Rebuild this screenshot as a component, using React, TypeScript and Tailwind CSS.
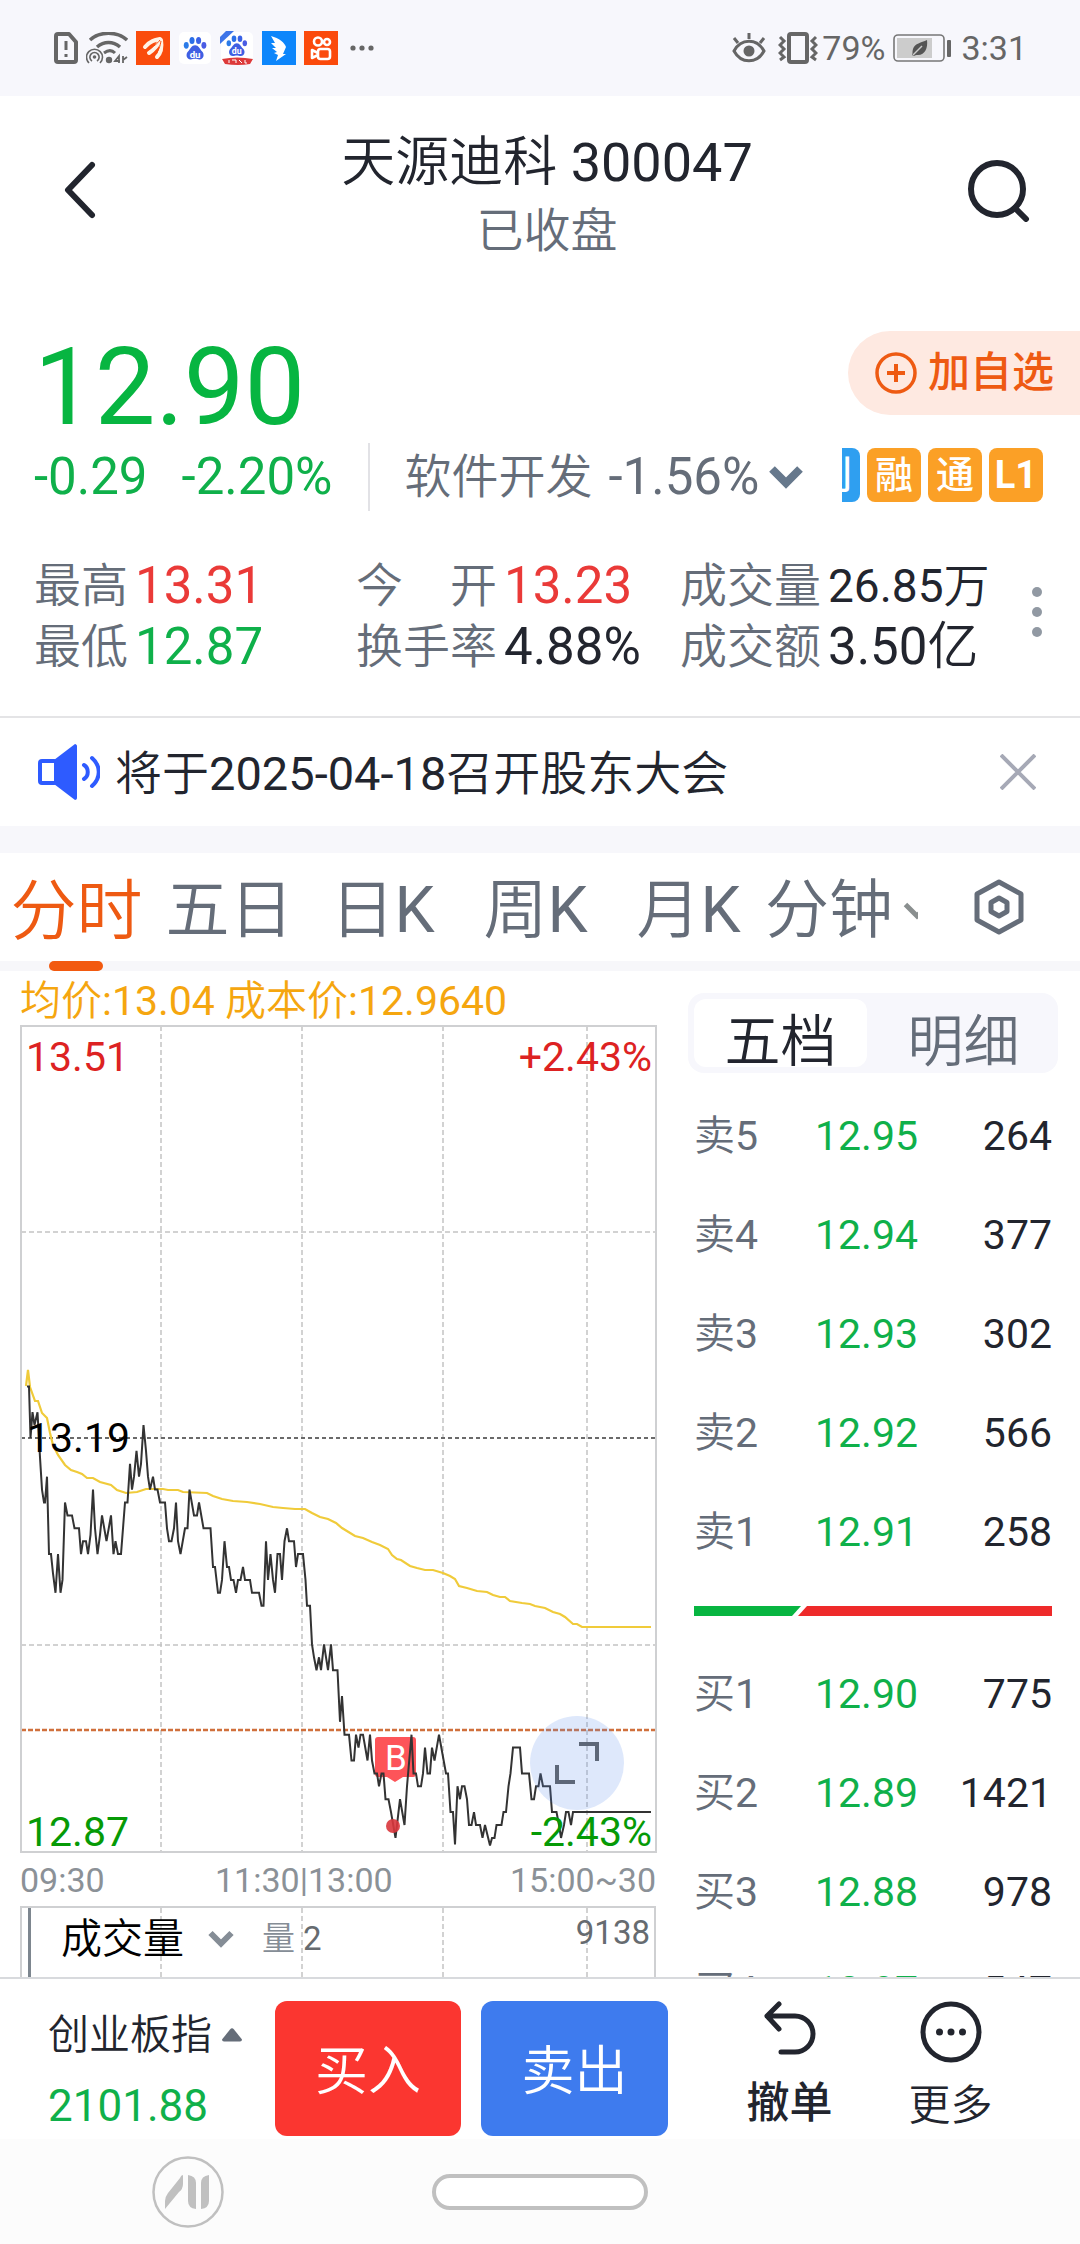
import React from "react";

type Side = "sell" | "buy";

interface Quote {
  label: string;
  price: string;
  amount: string;
}

const SELLS: Quote[] = [
  { label: "卖5", price: "12.95", amount: "264" },
  { label: "卖4", price: "12.94", amount: "377" },
  { label: "卖3", price: "12.93", amount: "302" },
  { label: "卖2", price: "12.92", amount: "566" },
  { label: "卖1", price: "12.91", amount: "258" },
];

const BUYS: Quote[] = [
  { label: "买1", price: "12.90", amount: "775" },
  { label: "买2", price: "12.89", amount: "1421" },
  { label: "买3", price: "12.88", amount: "978" },
  { label: "买4", price: "12.87", amount: "547" },
];

const PERIODS = ["分时", "五日", "日K", "周K", "月K"];

// [x, ticks below the previous close]
const PRICE_LINE: [number, number][] = [
  [7, -4], [9, -4], [10.5, 0], [12.5, -2], [14.5, -1], [17.5, -2], [20, 1.5], [22, 4], [24, 5], [25, 5],
  [27, 3], [29, 9], [31, 9], [33, 10.5], [35.5, 12], [38, 9], [40.5, 12], [42.5, 11], [45, 5], [47.5, 6],
  [52, 6], [54.5, 7], [59, 7], [61, 9], [63, 8], [66, 8], [68, 9], [70.5, 7.5], [73, 4], [75, 7],
  [77.5, 9], [80, 7.5], [82, 6], [86.5, 8], [91, 6], [93.5, 9], [95.5, 8], [98, 9], [101, 9], [103, 7],
  [105, 5], [107.5, 5], [110, 2], [112, 4], [114, 3], [116.5, 1], [119, 3], [121, 2], [123.5, -1], [126, 1],
  [128, 3], [130, 4], [133, 3], [135, 4], [137.5, 4], [140, 5], [145, 5], [147, 7], [149, 8], [151.5, 8],
  [154, 7], [156, 5], [158, 8], [160.5, 9], [165, 7], [167.5, 7], [169.5, 4], [174, 6], [177, 6], [179, 5],
  [183.5, 7], [190.5, 7], [193, 10], [195, 10], [198, 12], [200, 12], [202, 11], [204.5, 8], [207, 10], [209, 10],
  [211, 11], [213.5, 11], [216, 12], [218, 11], [220.5, 11], [223, 10], [225, 11], [230, 11], [232, 12], [239, 12],
  [241.5, 13], [243.5, 13], [246, 8], [248, 11], [250.5, 9], [253, 11], [255, 12], [257.5, 9], [260, 9], [262, 11],
  [264.5, 8], [267, 7], [269, 8], [274, 8], [276, 10], [278, 9], [283, 9], [285.5, 11], [287, 13], [290, 13],
  [292, 16], [294, 17], [296.5, 18], [299, 17], [301, 18], [304, 16], [308, 18], [311, 16], [313, 18], [317.5, 18],
  [320, 22], [322, 20], [324.5, 23], [329, 23], [331.5, 25], [334, 25], [336, 23], [338.5, 24], [340.5, 23], [343, 23],
  [347.5, 25], [350, 23], [352, 25], [354.5, 26], [357, 26], [359, 27], [361.5, 26], [363.5, 26], [365.5, 28], [368.5, 28],
  [371, 29], [375.5, 31], [380, 28], [384.5, 30], [387, 27], [391.5, 23], [393.5, 26], [396, 26], [398, 27], [401, 27],
  [403, 26], [405, 24], [407.5, 26], [410, 26], [412, 24], [414.5, 25], [419, 23], [426, 26], [428, 26], [430.5, 29],
  [433, 29], [435, 31.5], [437.5, 27], [440, 28], [442, 27], [444.5, 27], [447, 28], [449, 30], [451.5, 30], [454, 29],
  [456, 30], [460, 30], [462.5, 31], [465, 30], [470, 31.6], [472, 31], [474.5, 31], [476.5, 30], [481.5, 30], [483.5, 29],
  [486, 29], [488.5, 27], [490.5, 26], [493, 24], [500, 24], [502, 26], [509, 26], [511.5, 28], [514, 28], [516, 27],
  [518.5, 27], [520.5, 26], [523, 27], [530, 27], [532, 29], [536.5, 29], [539, 30], [541, 31], [544, 30], [546, 29],
  [548.5, 29], [551, 30], [553, 29], [631, 29],
];

const AVERAGE_LINE =
  "6,361 8,345 10,362 15,376 18,376 22,388 27,393 30,408 33,420 38,430 45,440 51,445 57,447 62,449 67,453 73,453 " +
  "80,457 91,460 97,465 106,468 117,467 126,464 143,464 148,465 158,465 163,467 187,468 193,471 202,474 213,476 " +
  "227,477 240,479 253,482 263,483 275,484 285,484 292,488 300,492 308,494 316,498 322,503 335,511 343,513 352,517 " +
  "360,520 368,524 372,530 377,534 381,535 390,541 397,543 405,545 413,545 423,548 430,551 435,554 439,561 447,563 " +
  "457,566 467,567 473,570 480,572 485,572 490,576 502,578 510,579 515,581 525,583 533,587 540,589 545,592 553,599 " +
  "557,599 562,602 631,602";

const pricePoints = PRICE_LINE.map(([x, t]) => `${x},${(413 + t * 12.9).toFixed(1)}`).join(" ");

const ChevronDown: React.FC<{ className: string; width: number }> = ({ className, width }) => (
  <svg className={className} viewBox="0 0 34 24" fill="none" stroke="currentColor" strokeWidth={width}>
    <path d="M3 4 L17 18 L31 4" />
  </svg>
);

const Paw: React.FC = () => (
  <g>
    <ellipse cx="6" cy="14" rx="2.8" ry="3.8" fill="#2b7be8" />
    <ellipse cx="12.5" cy="8.5" rx="2.9" ry="4" fill="#2b6fe8" />
    <ellipse cx="20" cy="8.5" rx="2.9" ry="4" fill="#3a62e6" />
    <ellipse cx="26" cy="14" rx="2.8" ry="3.8" fill="#4a5ce4" />
    <path d="M16 14c4 0 5 4 8 7s2 9-3 9c-2 0-3-.6-5-.6s-3 .6-5 .6c-5 0-6-6-3-9s4-7 8-7z" fill="#3f5fe3" />
    <text x="16" y="28" textAnchor="middle" fontSize="11" fontWeight="700" fill="#fff">
      du
    </text>
  </g>
);

const StatusBar: React.FC = () => (
  <div className="flex h-24 shrink-0 items-center justify-between bg-[#f7f7fc] pl-[54px] pr-[53px] text-[#666]">
    <div className="flex items-center gap-2">
      <svg className="h-8 w-6" viewBox="0 0 24 32" fill="none" stroke="currentColor" strokeWidth="4">
        <path d="M4 2h11l7 8v18a2 2 0 0 1-2 2H4a2 2 0 0 1-2-2V4a2 2 0 0 1 2-2z" strokeLinejoin="round" />
        <path d="M12 9v9M12 22v3" strokeWidth="3" />
      </svg>
      <svg className="h-8 w-[42px]" viewBox="0 0 42 32" fill="none" stroke="currentColor">
        <path d="M4 8c10-9 27-9 37 0M11 15c7-6 16-6 23 0" strokeWidth="3.5" />
        <path d="M18 21c4-3 8-3 11 0" strokeWidth="3" />
        <circle cx="23" cy="28" r="3.2" fill="currentColor" stroke="none" />
        <path d="M3 31a8 8 0 1 1 11 0M6 29a4.600 4.600 0 1 1 5 0" strokeWidth="1.6" />
        <circle cx="8.5" cy="25" r="1.8" fill="currentColor" stroke="none" />
        <path d="M33 31v-7l-4 5h5M37 24v7M37 28l4-3" strokeWidth="1.8" />
      </svg>
      <svg className="h-[34px] w-[34px]" viewBox="0 0 34 34">
        <rect width="34" height="34" fill="#fa4c0c" />
        <g fill="none" stroke="#fff3e6" strokeWidth="4" strokeLinecap="round">
          <path d="M9 16C14 10 19 9 24 8" />
          <path d="M13 22C19 18 22 14 24 9" />
          <path d="M21 26C26 21 26 15 25 9" />
        </g>
        <path d="M12 19C18 15 21 13 24 9M18 25C23 20 24 15 25 10" fill="none" stroke="#fa4c0c" />
      </svg>
      <svg className="h-[34px] w-[34px]" viewBox="-1 0 34 34">
        <rect x="0" y="1" width="32" height="32" rx="5" fill="#fff" />
        <g transform="translate(2 2) scale(0.88)">
          <Paw />
        </g>
      </svg>
      <svg className="h-[34px] w-[34px]" viewBox="0 0 34 34">
        <rect x="1" y="1" width="32" height="32" rx="5" fill="#fff" />
        <g transform="translate(4 1) scale(0.8)">
          <Paw />
        </g>
        <path d="M0 13V6l6-6h8z" fill="#3d74e8" />
        <path d="M2 28q15-3 31 0l-3 5q-12 2-25 0z" fill="#dd3a3a" />
        <path d="M9 29v3M12 29h4v3M19 29l3 3M25 29v3h2" stroke="#fff" fill="none" />
      </svg>
      <svg className="h-[34px] w-[34px]" viewBox="0 0 34 34">
        <rect width="34" height="34" fill="#0d86fb" />
        <path d="M9 5c8 2 14 7 15 11l-3 7h3l-10 7 2-6-4-2 3-1-5-4 4 0-5-5 4 0z" fill="#fff" />
      </svg>
      <svg className="h-[34px] w-[34px]" viewBox="0 0 34 34" fill="none" stroke="#fff" strokeWidth="2.6">
        <rect width="34" height="34" fill="#fb4a0c" stroke="none" />
        <circle cx="14" cy="10.5" r="4" />
        <circle cx="23" cy="11" r="3" />
        <rect x="14" y="18" width="12" height="10" rx="2.5" />
        <path d="M14 22l-6-3v8l6-3" strokeLinejoin="round" />
      </svg>
      <svg className="ml-1 h-2 w-6" viewBox="0 0 24 8" fill="currentColor">
        <circle cx="3" cy="4" r="2.6" />
        <circle cx="12" cy="4" r="2.6" />
        <circle cx="21" cy="4" r="2.6" />
      </svg>
    </div>
    <div className="flex items-center text-[34px] leading-10">
      <svg className="h-8 w-[34px]" viewBox="0 0 34 32" fill="none" stroke="currentColor" strokeWidth="3">
        <path d="M2 19c7-13 23-13 30 0-7 13-23 13-30 0z" />
        <circle cx="17" cy="19" r="5.5" fill="currentColor" stroke="none" />
        <path d="M17 7V1M6 11L2 6M28 11l4-5" />
      </svg>
      <svg className="ml-3 h-8 w-10" viewBox="0 0 40 32" fill="none" stroke="currentColor">
        <rect x="11" y="2" width="18" height="28" rx="2" strokeWidth="4" />
        <path d="M2 5l4 4-4 4 4 4-4 4 4 4-4 3M38 5l-4 4 4 4-4 4 4 4-4 4 4 3" strokeWidth="3" />
      </svg>
      <span className="ml-1">79%</span>
      <svg className="ml-2 h-7 w-[60px]" viewBox="0 0 60 28" fill="none">
        <rect x="1" y="1" width="50" height="26" rx="4" stroke="#777" strokeWidth="1.6" />
        <rect x="4" y="4" width="35" height="20" fill="#ccc" />
        <path d="M34 6c1 8-2 15-9 15-2 0-3 0-4 1l-2-1c1-2 0-3 1-6 2-6 8-6 14-9z" fill="#555" />
        <path d="M20 21l9-9" stroke="#ccc" strokeWidth="1.5" />
        <rect x="54" y="6" width="4" height="17" rx="1" fill="#666" />
      </svg>
      <span className="ml-2">3:31</span>
    </div>
  </div>
);

const Header: React.FC = () => (
  <header className="flex items-start pt-8">
    <button aria-label="返回" className="flex h-[124px] w-[160px] items-center pl-[62px]">
      <svg className="h-[60px] w-9" viewBox="0 0 36 60" fill="none" stroke="#22252e" strokeWidth="6">
        <path d="M30 5L6 30l24 25" strokeLinecap="round" strokeLinejoin="round" />
      </svg>
    </button>
    <div className="flex-1 text-center">
      <h1 className="text-[54px] leading-[70px] text-[#22252e]">天源迪科 300047</h1>
      <p className="text-[47px] leading-[66px] text-[#656d79]">已收盘</p>
    </div>
    <button aria-label="搜索" className="flex h-[124px] w-[146px] items-center pl-8">
      <svg className="h-16 w-16" viewBox="0 0 64 64" fill="none" stroke="#22252e" strokeWidth="6">
        <circle cx="31" cy="31" r="26" />
        <path d="M49 50l11 11" strokeLinecap="round" />
      </svg>
    </button>
  </header>
);

interface StatProps {
  label: string;
  value: string;
  className: string;
}

const Stat: React.FC<StatProps> = ({ label, value, className }) => (
  <div className="flex h-[61px] items-center gap-[7px] whitespace-nowrap">
    <dt className="text-[47px] text-[#656d79]">{label}</dt>
    <dd className={className}>{value}</dd>
  </div>
);

const Summary: React.FC = () => (
  <section className="mt-[67px] border-b-2 border-[#e4e4e6] pb-[38px]">
    <div className="flex h-[110px] items-start justify-between pl-[34px]">
      <strong className="text-[108px] font-normal leading-[112px] text-[#07b541]">12.90</strong>
      <button className="flex h-[84px] items-center gap-2.5 rounded-l-full bg-[#fee9e1] pl-[26px] pr-[26px] text-[42px] leading-none text-[#ee5a12] [font-family:Roboto,'Noto_Sans_CJK_SC_Medium','Noto_Sans_CJK_SC',sans-serif]">
        <svg className="h-11 w-11" viewBox="0 0 44 44" fill="none" stroke="currentColor" strokeWidth="3.5">
          <circle cx="22" cy="22" r="19" />
          <path d="M22 13v18M13 22h18" strokeWidth="4" />
        </svg>
        加自选
      </button>
    </div>
    <div className="flex h-[72px] items-center whitespace-nowrap pl-[34px] pr-[37px] text-[51px]">
      <span className="text-[#0fb04a]">-0.29</span>
      <span className="ml-[34px] text-[#0fb04a]">-2.20%</span>
      <span className="ml-9 h-[68px] w-0.5 bg-[#e2e2e6]" />
      <button className="ml-[34px] flex items-center text-[#656d79]">
        <span className="text-[47px]">软件开发</span>
        <span className="ml-4">-1.56%</span>
        <ChevronDown className="ml-2.5 h-6 w-[34px] text-[#66788c]" width={8} />
      </button>
      <div className="mb-1 ml-auto flex gap-[7px] text-[38px] leading-[54px] text-white [font-family:Roboto,'Noto_Sans_CJK_SC_Medium','Noto_Sans_CJK_SC',sans-serif]">
        <span className="flex h-[54px] w-[18px] justify-end overflow-hidden rounded-r-lg bg-[#2f9ff0] pr-2">创</span>
        <span className="h-[54px] w-[54px] rounded-lg bg-[#fba026] text-center">融</span>
        <span className="h-[54px] w-[54px] rounded-lg bg-[#fba026] text-center">通</span>
        <span className="h-[54px] w-[54px] rounded-lg bg-[#fba026] text-center font-bold">L1</span>
      </div>
    </div>
    <div className="mt-[43px] flex pl-[34px]">
      <dl className="grid flex-1 grid-cols-[322px_324px_1fr] text-[51px]">
        <Stat label="最高" value="13.31" className="text-[#ea3a38]" />
        <Stat label="今　开" value="13.23" className="text-[#ea3a38]" />
        <Stat label="成交量" value="26.85万" className="text-[46px] text-[#22252e]" />
        <Stat label="最低" value="12.87" className="text-[#0fb04a]" />
        <Stat label="换手率" value="4.88%" className="text-[#22252e]" />
        <Stat label="成交额" value="3.50亿" className="text-[#22252e]" />
      </dl>
      <button aria-label="更多行情" className="flex h-28 w-[86px] flex-col items-center justify-center gap-2.5">
        <span className="h-2.5 w-2.5 rounded-full bg-[#9199a3]" />
        <span className="h-2.5 w-2.5 rounded-full bg-[#9199a3]" />
        <span className="h-2.5 w-2.5 rounded-full bg-[#9199a3]" />
      </button>
    </div>
  </section>
);

const Notice: React.FC = () => (
  <section className="flex h-[108px] items-center pl-[38px] pr-11">
    <svg className="h-14 w-[62px]" viewBox="0 0 62 56" fill="none" stroke="#2e5bff" strokeWidth="4">
      <rect x="2" y="17" width="16" height="22" rx="2" />
      <path d="M16 16L37 0c1 0 2 1 2 2v52c0 1-1 2-2 2L16 40z" fill="#2e5bff" stroke="none" />
      <path d="M46 21c5 3 5 11 0 14M54 14c9 8 9 20 0 28" strokeLinecap="round" />
    </svg>
    <p className="ml-[15px] flex-1 pt-1 text-[47px] text-[#22252e]">将于2025-04-18召开股东大会</p>
    <button aria-label="关闭">
      <svg className="h-9 w-9" viewBox="0 0 36 36" stroke="#a6a9b6" strokeWidth="4">
        <path d="M1 1l34 34M35 1L1 35" />
      </svg>
    </button>
  </section>
);

const PeriodTabs: React.FC = () => (
  <nav className="flex h-[108px] text-[64px] text-[#656d79]">
    <div className="flex min-w-0 flex-1 overflow-x-clip pt-2">
      {PERIODS.map((name, i) => (
        <button
          key={name}
          className={i === 0 ? "relative w-[153px] shrink-0 text-[66px] text-[#ee5a12]" : "w-[153px] shrink-0"}
        >
          {name}
          {i === 0 && <span className="absolute -bottom-2.5 left-[49px] h-2.5 w-[54px] rounded-full bg-[#f25a10]" />}
        </button>
      ))}
      <button className="flex shrink-0 items-center">
        分钟
        <ChevronDown className="ml-2.5 h-5 w-7 text-[#8a8f8f]" width={6} />
      </button>
    </div>
    <button aria-label="图表设置" className="flex w-[162px] shrink-0 items-center justify-center">
      <svg className="h-14 w-[52px]" viewBox="0 0 52 56" fill="none" stroke="#656d79" strokeWidth="5" strokeLinejoin="round">
        <path d="M26 3l22 12v26L26 53 4 41V15z" />
        <path d="M26 19l8 4.500v9L26 37l-8-4.500v-9z" />
      </svg>
    </button>
  </nav>
);

const PriceChart: React.FC = () => (
  <div className="relative">
    <svg className="block w-full overflow-visible" viewBox="0 0 636 828" fill="none" fontSize="41">
      <g stroke="#c4c4c4" strokeWidth="1.5" strokeDasharray="5 3">
        <path d="M141 1v826M282 1v826M423 1v826M567 1v826" />
        <path d="M1 207h634M1 620h634" />
      </g>
      <path d="M1 413h634" stroke="#6a6a6a" strokeWidth="2" strokeDasharray="4 3" />
      <path d="M1 705h634" stroke="#d0703c" strokeWidth="2.5" strokeDasharray="5 2" />
      <rect x="1" y="1" width="635" height="826" stroke="#cfd0d2" strokeWidth="2" />
      <path d="M358 712h35a3 3 0 0 1 3 3v34a3 3 0 0 1-3 3h-10l-8 5-8-5h-9a3 3 0 0 1-3-3v-34a3 3 0 0 1 3-3z" fill="#fd5459" />
      <text x="376" y="745" fontSize="35" textAnchor="middle" fill="#fff">
        B
      </text>
      <polyline points={AVERAGE_LINE} stroke="#f0cb3a" strokeWidth="2.2" />
      <polyline points={pricePoints} stroke="#333" strokeWidth="2" />
      <circle cx="373" cy="801" r="7" fill="#d9363c" fillOpacity="0.9" />
      <text x="6" y="46" fill="#dd2222">
        13.51
      </text>
      <text x="632" y="46" textAnchor="end" fill="#dd2222">
        +2.43%
      </text>
      <text x="7" y="427" fill="#000">
        13.19
      </text>
      <text x="6" y="821" fill="#069a06">
        12.87
      </text>
      <text x="632" y="821" textAnchor="end" fill="#069a06">
        -2.43%
      </text>
    </svg>
    <button
      aria-label="全屏"
      className="absolute bottom-[43px] right-8 flex h-[94px] w-[94px] items-center justify-center rounded-full bg-[#5a8cec]/20"
    >
      <svg className="h-11 w-11" viewBox="0 0 44 44" fill="none" stroke="#5d6778" strokeWidth="4">
        <path d="M24 3h18v17M2 24v17h18" />
      </svg>
    </button>
  </div>
);

const VolumePanel: React.FC = () => (
  <div className="relative h-[120px] border-2 border-[#cfd0d2]">
    <svg className="absolute inset-0 h-full w-full" viewBox="0 0 632 116" preserveAspectRatio="none">
      <path d="M139 0v116M280 0v116M421 0v116M565 0v116" stroke="#c4c4c4" strokeWidth="1.5" strokeDasharray="5 3" />
    </svg>
    <div className="relative ml-1.5 flex h-full items-start border-l-[3px] border-[#7d868f] pr-1 leading-[62px]">
      <button className="ml-[30px] flex items-center text-[41px] text-black">
        成交量
        <ChevronDown className="ml-6 h-[18px] w-[26px] text-[#858d96]" width={8} />
      </button>
      <span className="ml-7 text-[33px] text-[#858d96]">量</span>
      <span className="ml-2 text-[33px] text-[#666b70]">2</span>
      <span className="ml-auto text-[33px] leading-[50px] text-[#666b70]">9138</span>
    </div>
  </div>
);

const QuoteTable: React.FC<{ side: Side; rows: Quote[] }> = ({ side, rows }) => (
  <table className="w-full table-fixed text-[41px]" aria-label={side === "sell" ? "卖盘" : "买盘"}>
    <tbody>
      {rows.map((row) => (
        <tr key={row.label} className="h-[99px]">
          <th scope="row" className="w-[121px] p-0 text-left font-normal text-[#656d79]">
            {row.label}
          </th>
          <td className="p-0 text-[#0fb04a]">{row.price}</td>
          <td className="p-0 text-right text-[#22252e]">{row.amount}</td>
        </tr>
      ))}
    </tbody>
  </table>
);

const OrderBook: React.FC = () => (
  <aside className="w-[370px] shrink-0 pt-[22px]">
    <div className="flex h-20 rounded-2xl bg-[#f7f7fc] p-1.5 text-[56px] leading-[54px]">
      <button className="w-[173px] rounded-xl bg-white pt-4 text-[#22252e]">五档</button>
      <button className="flex-1 pl-2 pt-4 text-[#656d79]">明细</button>
    </div>
    <div className="mt-3.5 px-1.5">
      <QuoteTable side="sell" rows={SELLS} />
      <svg className="mb-[29px] mt-6 block h-2.5 w-full" viewBox="0 0 358 10" preserveAspectRatio="none">
        <path d="M0 0h107l-9 10H0z" fill="#07b541" />
        <path d="M113 0h245v10H104z" fill="#ee2a2a" />
      </svg>
      <QuoteTable side="buy" rows={BUYS} />
    </div>
  </aside>
);

const TradeBar: React.FC = () => (
  <footer className="flex shrink-0 items-start border-t-2 border-[#d8dadd] bg-white pb-[3px] pt-[22px] text-[#22252e]">
    <button className="w-[275px] pl-12 pt-1.5 text-left">
      <span className="flex items-center gap-2.5 text-[41px] leading-[56px]">
        创业板指
        <svg className="h-3.5 w-5" viewBox="0 0 20 14" fill="#656d79">
          <path d="M8 1.500q2-2.500 4 0l8 10q0 2-2 2H2q-2 0-2-2z" />
        </svg>
      </span>
      <span className="mt-[15px] block text-[44px] leading-[56px] text-[#0fb04a]">2101.88</span>
    </button>
    <div className="flex gap-5 text-[53px] text-white">
      <button className="h-[135px] w-[186px] rounded-xl bg-[#fb3630] pt-2">买入</button>
      <button className="h-[135px] w-[187px] rounded-xl bg-[#3e7bee] pt-2">卖出</button>
    </div>
    <div className="ml-[41px] flex text-[42px] leading-[52px]">
      <button className="flex w-[161px] flex-col items-center">
        <svg className="h-[54px] w-[54px]" viewBox="0 0 54 54" fill="none" stroke="#22252e" strokeWidth="5" strokeLinecap="round" strokeLinejoin="round">
          <path d="M16 3L4 15l12 13M4 15h28a18 18 0 0 1 0 36H18" />
        </svg>
        <span className="mt-[22px] text-[43px] [font-family:Roboto,'Noto_Sans_CJK_SC_Medium','Noto_Sans_CJK_SC',sans-serif]">
          撤单
        </span>
      </button>
      <button className="flex w-[161px] flex-col items-center">
        <svg className="h-[62px] w-[62px]" viewBox="0 0 62 62" fill="#22252e">
          <circle cx="31" cy="31" r="28" fill="none" stroke="#22252e" strokeWidth="5" />
          <circle cx="19.5" cy="31" r="3.5" />
          <circle cx="31" cy="31" r="3.5" />
          <circle cx="42.5" cy="31" r="3.5" />
        </svg>
        <span className="mt-[17px]">更多</span>
      </button>
    </div>
  </footer>
);

const SystemNav: React.FC = () => (
  <div className="flex h-[105px] shrink-0 items-center gap-52 bg-[#fcfcfc] pl-[152px]">
    <svg className="h-[72px] w-[72px]" viewBox="0 0 72 72" fill="#c0c0c0">
      <circle cx="36" cy="36" r="34.5" fill="none" stroke="#c0c0c0" strokeWidth="2.5" />
      <path d="M31 19v9q0 5-4 8L13 53V45q0-4 3-8l12-15q1-3 3-3z" />
      <path d="M36 19q8 1 8 8v26q-8-1-8-8z" />
      <path d="M57 19q-8 1-8 8v26q8-1 8-8z" />
    </svg>
    <div className="h-9 w-[216px] rounded-full border-4 border-[#c0c0c0] bg-white" />
  </div>
);

export default function App() {
  return (
    <div className="flex h-screen flex-col overflow-hidden bg-white [font-family:Roboto,'Noto_Sans_CJK_SC_DemiLight','Noto_Sans_CJK_SC_Light','Noto_Sans_CJK_SC',sans-serif]">
      <StatusBar />
      <main className="flex min-h-0 flex-1 flex-col overflow-hidden">
        <Header />
        <Summary />
        <Notice />
        <div className="h-[27px] shrink-0 bg-[#f7f7fb]" />
        <PeriodTabs />
        <div className="h-2.5 shrink-0 bg-[#f7f7fa]" />
        <div className="flex min-h-0 flex-1 gap-8 overflow-hidden pl-5 pr-[22px]">
          <section className="min-w-0 flex-1 pt-1.5">
            <p className="whitespace-nowrap text-[41px] leading-[48px] text-[#f5a60f]">均价:13.04 成本价:12.9640</p>
            <PriceChart />
            <div className="flex h-[53px] items-center whitespace-nowrap pt-0.5 text-[34px] text-[#8b9197]">
              <span className="w-[195px]">09:30</span>
              <span className="flex-1">11:30|13:00</span>
              <span>15:00~30</span>
            </div>
            <VolumePanel />
          </section>
          <OrderBook />
        </div>
      </main>
      <TradeBar />
      <SystemNav />
    </div>
  );
}
